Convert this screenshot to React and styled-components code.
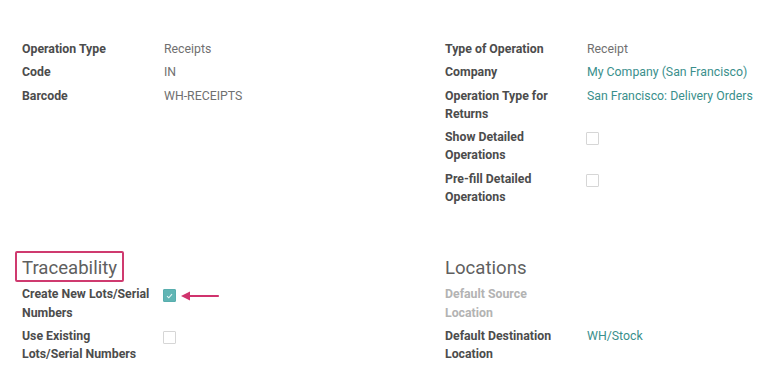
import React from "react";
import styled, { createGlobalStyle } from "styled-components";

const Global = createGlobalStyle`
  html, body { margin: 0; padding: 0; background: #fff; }
  body { font-family: Roboto, "Noto Sans", "Liberation Sans", sans-serif; font-size: 12.3px; }
`;

const Page = styled.div`
  padding: 40px 0 0 22px;
  width: 768px;
  box-sizing: border-box;
`;

const Section = styled.div`
  display: grid;
  grid-template-columns: 423px 1fr;
  margin-top: ${(p) => p.$top || 0}px;
`;

const Column = styled.div`
  display: flex;
  flex-direction: column;
  gap: 5px;
`;

const Heading = styled.h2`
  margin: 0 0 -2px -7px;
  align-self: flex-start;
  padding: 4px 5px 1px;
  border: 2px solid ${(p) => (p.$highlight ? "#cf3a6f" : "transparent")};
  border-radius: 2px;
  font-family: Roboto, "Noto Sans", sans-serif;
  font-weight: 400;
  font-size: 18.6px;
  line-height: 22px;
  color: #5f5f5f;
`;

const Row = styled.div`
  display: grid;
  grid-template-columns: 142px 1fr;
  line-height: 18.3px;
`;

const Label = styled.div`
  font-weight: 700;
  padding-right: 12px;
  color: ${(p) => (p.$muted ? "#b3b3b3" : "#4c4c4c")};
`;

const Value = styled.div`
  display: flex;
  align-items: flex-start;
  gap: 4px;
  color: ${(p) => (p.$link ? "#3a8f8c" : "#707070")};
`;

const Box = styled.span`
  display: inline-flex;
  align-items: center;
  justify-content: center;
  box-sizing: border-box;
  width: 13px;
  height: 13px;
  margin: 4px 0 0 -1px;
  border: 1px solid ${(p) => (p.$checked ? "#58aeae" : "#d6d6d6")};
  background: ${(p) => (p.$checked ? "#61b5b4" : "#fff")};
  border-radius: 1px;
`;

const ArrowIcon = styled.svg`
  margin-top: 4.5px;
`;

const Check = ({ checked }) => (
  <Box $checked={checked}>
    {checked && (
      <svg width="7" height="6" viewBox="0 0 7 6">
        <path d="M1 3.2 L2.8 4.8 L6 1.2" fill="none" stroke="#e8f6f6" strokeWidth="1.1" />
      </svg>
    )}
  </Box>
);

const Arrow = () => (
  <ArrowIcon width="40" height="12" viewBox="0 0 40 12">
    <path d="M5 6 H38" stroke="#d0336d" strokeWidth="2.2" strokeLinecap="round" />
    <path d="M1 6 L10 1.5 L10 10.5 Z" fill="#d0336d" />
  </ArrowIcon>
);

const Field = ({ label, value, link, muted, children }) => (
  <Row>
    <Label $muted={muted}>{label}</Label>
    <Value $link={link}>{children || value}</Value>
  </Row>
);

export default function App() {
  return (
    <>
      <Global />
      <Page>
        <Section>
          <Column>
            <Field label="Operation Type" value="Receipts" />
            <Field label="Code" value="IN" />
            <Field label="Barcode" value="WH-RECEIPTS" />
          </Column>
          <Column>
            <Field label="Type of Operation" value="Receipt" />
            <Field label="Company" value="My Company (San Francisco)" link />
            <Field label="Operation Type for Returns" value="San Francisco: Delivery Orders" link />
            <Field label="Show Detailed Operations">
              <Check />
            </Field>
            <Field label="Pre-fill Detailed Operations">
              <Check />
            </Field>
          </Column>
        </Section>
        <Section $top={45}>
          <Column>
            <Heading $highlight>Traceability</Heading>
            <Field label="Create New Lots/Serial Numbers">
              <Check checked />
              <Arrow />
            </Field>
            <Field label="Use Existing Lots/Serial Numbers">
              <Check />
            </Field>
          </Column>
          <Column>
            <Heading>Locations</Heading>
            <Field label="Default Source Location" muted />
            <Field label="Default Destination Location" value="WH/Stock" link />
          </Column>
        </Section>
      </Page>
    </>
  );
}
